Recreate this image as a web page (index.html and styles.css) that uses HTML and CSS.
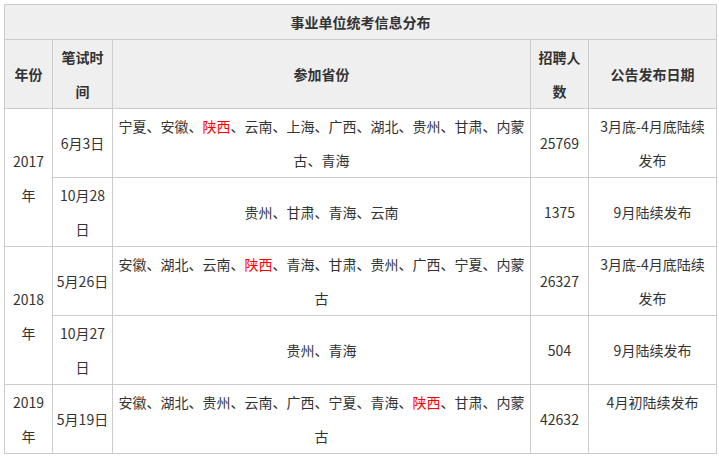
FILE: index.html
```html
<!DOCTYPE html>
<html lang="zh-CN">
<head>
<meta charset="utf-8">
<title>事业单位统考信息分布</title>
<link rel="stylesheet" href="styles.css">
</head>
<body>
<table class="info-table">
  <colgroup>
    <col class="c-year">
    <col class="c-date">
    <col class="c-prov">
    <col class="c-num">
    <col class="c-notice">
  </colgroup>
  <thead>
    <tr><th colspan="5" class="title">事业单位统考信息分布</th></tr>
    <tr>
      <th>年份</th>
      <th>笔试时间</th>
      <th>参加省份</th>
      <th>招聘人数</th>
      <th>公告发布日期</th>
    </tr>
  </thead>
  <tbody>
    <tr>
      <td rowspan="2">2017年</td>
      <td class="nowrap">6月3日</td>
      <td>宁夏、安徽、<span class="hl">陕西</span>、云南、上海、广西、湖北、贵州、甘肃、内蒙古、青海</td>
      <td>25769</td>
      <td class="notice">3月底-4月底陆续发布</td>
    </tr>
    <tr>
      <td>10月28日</td>
      <td>贵州、甘肃、青海、云南</td>
      <td>1375</td>
      <td class="notice">9月陆续发布</td>
    </tr>
    <tr>
      <td rowspan="2">2018年</td>
      <td class="nowrap">5月26日</td>
      <td>安徽、湖北、云南、<span class="hl">陕西</span>、青海、甘肃、贵州、广西、宁夏、内蒙古</td>
      <td>26327</td>
      <td class="notice">3月底-4月底陆续发布</td>
    </tr>
    <tr>
      <td>10月27日</td>
      <td>贵州、青海</td>
      <td>504</td>
      <td class="notice">9月陆续发布</td>
    </tr>
    <tr>
      <td>2019年</td>
      <td class="nowrap">5月19日</td>
      <td>安徽、湖北、贵州、云南、广西、宁夏、青海、<span class="hl">陕西</span>、甘肃、内蒙古</td>
      <td>42632</td>
      <td class="notice top">4月初陆续发布</td>
    </tr>
  </tbody>
</table>
<div class="below"><span class="smudge"></span></div>
</body>
</html>
```

FILE: styles.css
```css
html, body {
  margin: 0;
  padding: 0;
  background: #ffffff;
}
body {
  font-family: "Noto Sans CJK SC", "Noto Sans", sans-serif;
  font-size: 14px;
  color: #333333;
}
.info-table {
  margin: 4px 0 0 4px;
  width: 712px;
  table-layout: fixed;
  border-collapse: collapse;
}
.c-year { width: 48px; }
.c-date { width: 60px; }
.c-prov { width: 418px; }
.c-num { width: 58px; }
.c-notice { width: 128px; }
.info-table th,
.info-table td {
  border: 1px solid #cccccc;
  padding: 0 4px;
  line-height: 34px;
  text-align: center;
  vertical-align: middle;
  word-break: break-all;
}
.info-table th {
  background: #efefef;
  font-weight: bold;
  color: #333333;
}
.info-table td.nowrap {
  white-space: nowrap;
  padding: 0 1px;
}
.info-table td.notice {
  padding: 0 6px;
}
.info-table td.top {
  vertical-align: top;
}
.hl {
  color: #ff0000;
}
.below {
  height: 5px;
  padding-left: 223px;
  overflow: hidden;
}
.smudge {
  display: block;
  margin-top: 3px;
  width: 12px;
  height: 5px;
  border-radius: 6px 6px 0 0;
  background: #f5d76e;
}
```
